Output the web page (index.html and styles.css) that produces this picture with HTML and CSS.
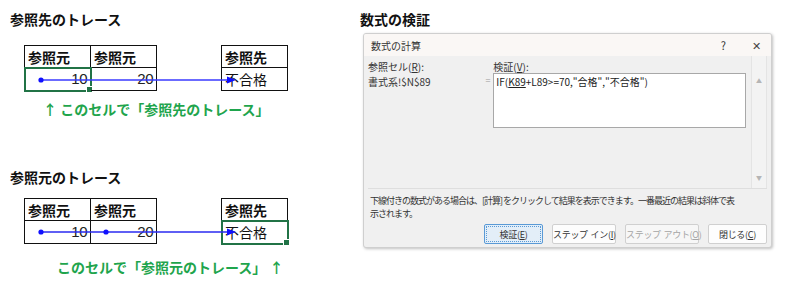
FILE: index.html
```html
<!DOCTYPE html>
<html lang="ja">
<head>
    <meta charset="UTF-8">
    <title>参照先・参照元のトレース</title>
    <link rel="stylesheet" href="styles.css">
</head>
<body>
    <div class="page">
        <div class="left">
            <h2 class="heading">参照先のトレース</h2>
            <div class="trace">
                <div class="sheet">
                    <div class="cell head">参照元</div>
                    <div class="cell head">参照元</div>
                    <div class="cell num selected">10</div>
                    <div class="cell num">20</div>
                </div>
                <div class="sheet single">
                    <div class="cell head">参照先</div>
                    <div class="cell">不合格</div>
                </div>
                <svg class="arrows" width="270" height="50" viewBox="0 0 270 50">
                    <line x1="17" y1="35" x2="206" y2="35" stroke="#3a3aff" stroke-width="1.3"/>
                    <circle cx="17" cy="35" r="2.6" fill="#1010ff"/>
                    <polygon points="212,35 203,31.5 203,38.5" fill="#1010ff"/>
                </svg>
            </div>
            <p class="note first">↑ このセルで「参照先のトレース」</p>

            <h2 class="heading second">参照元のトレース</h2>
            <div class="trace">
                <div class="sheet">
                    <div class="cell head">参照元</div>
                    <div class="cell head">参照元</div>
                    <div class="cell num">10</div>
                    <div class="cell num">20</div>
                </div>
                <div class="sheet single">
                    <div class="cell head">参照先</div>
                    <div class="cell selected">不合格</div>
                </div>
                <svg class="arrows" width="270" height="50" viewBox="0 0 270 50">
                    <line x1="17" y1="34" x2="206" y2="34" stroke="#2a2af0" stroke-width="1.3"/>
                    <circle cx="17" cy="34" r="2.6" fill="#1010ff"/>
                    <circle cx="82" cy="34" r="2.6" fill="#1010ff"/>
                    <polygon points="212,34 203,30.5 203,37.5" fill="#1010ff"/>
                </svg>
            </div>
            <p class="note last">このセルで「参照元のトレース」 ↑</p>
        </div>

        <div class="right">
            <h2 class="heading">数式の検証</h2>
            <div class="dialog">
                <div class="titlebar">
                    <span class="title">数式の計算</span>
                    <span class="help">?</span>
                    <span class="close">✕</span>
                </div>
                <div class="dialog-body">
                    <div class="fields">
                        <div class="ref">
                            <div>参照セル(<u>R</u>):</div>
                            <div>書式系!$N$89</div>
                        </div>
                        <div class="eq">=</div>
                        <div class="eval">
                            <div>検証(<u>V</u>):</div>
                            <div class="formula">IF(<u>K89</u>+L89&gt;=70,"合格","不合格")</div>
                        </div>
                        <div class="scroll">
                            <span>▲</span>
                            <span>▼</span>
                        </div>
                    </div>
                    <div class="hint">下線付きの数式がある場合は、[計算] をクリックして結果を表示できます。一番最近の結果は斜体で表<br>示されます。</div>
                    <div class="buttons">
                        <button class="btn primary">検証(<u>E</u>)</button>
                        <button class="btn">ステップ イン(<u>I</u>)</button>
                        <button class="btn disabled">ステップ アウト(<u>O</u>)</button>
                        <button class="btn">閉じる(<u>C</u>)</button>
                    </div>
                </div>
            </div>
        </div>
    </div>
</body>
</html>
```

FILE: styles.css
```css
* {
    margin: 0;
    padding: 0;
    box-sizing: border-box;
}

body {
    background: #fff;
    color: #111;
    font-family: 'Noto Sans CJK JP', 'Noto Sans', sans-serif;
}

.page {
    display: flex;
}

.left {
    width: 355px;
    padding-left: 10px;
}

.heading {
    font-size: 14px;
    line-height: 20px;
    font-weight: bold;
    margin-top: 9px;
}

.heading.second {
    margin-top: 48px;
}

.trace {
    position: relative;
    display: flex;
    gap: 64px;
    margin: 16px 0 0 14px;
}

.heading.second + .trace {
    margin-top: 11px;
}

.sheet {
    display: grid;
    grid-template-columns: 66px 66px;
    border-left: 1px solid #111;
    border-top: 1px solid #111;
}

.sheet.single {
    grid-template-columns: 66px;
}

.cell {
    position: relative;
    height: 23px;
    border-right: 1px solid #111;
    border-bottom: 1px solid #111;
    font-size: 14px;
    line-height: 22px;
    padding: 0 3px;
}

.cell.head {
    height: 22px;
    font-weight: bold;
}

.cell.num {
    text-align: right;
    font-family: 'Liberation Sans', 'Noto Sans CJK JP', sans-serif;
    font-size: 15px;
    letter-spacing: -0.5px;
    color: #222;
}

.cell.selected {
    outline: 2px solid #217346;
    outline-offset: -1px;
}

.cell.selected::after {
    content: "";
    position: absolute;
    right: -3px;
    bottom: -3px;
    width: 5px;
    height: 5px;
    background: #217346;
    border: 1px solid #fff;
}

.arrows {
    position: absolute;
    left: 0;
    top: 0;
}

.note {
    font-size: 14px;
    line-height: 20px;
    font-weight: bold;
    color: #1fa54d;
}

.note.first {
    margin: 8px 0 0 33px;
}

.note.last {
    margin: 13px 0 0 47px;
}

.right {
    padding-left: 5px;
}

.dialog {
    margin: 4px 0 0 3px;
    width: 409px;
    height: 215px;
    background: #f0f0f0;
    border: 1px solid #cfcfcf;
    border-radius: 3px;
    box-shadow: 1px 1px 3px rgba(0, 0, 0, 0.25);
    font-size: 10px;
    color: #333;
    overflow: hidden;
}

.titlebar {
    display: flex;
    align-items: center;
    height: 22px;
    background: #faf7f5;
    padding: 0 10px 0 7px;
}

.title {
    flex: 1;
    font-size: 10px;
}

.help {
    font-size: 11px;
    margin-right: 26px;
}

.close {
    font-size: 11px;
    color: #444;
}

.dialog-body {
    padding: 0 4px;
}

.fields {
    display: flex;
    height: 133px;
    border-bottom: 1px solid #dedede;
}

.ref {
    width: 118px;
    padding-top: 3px;
    line-height: 15px;
}

.eq {
    width: 8px;
    padding-top: 18px;
    color: #999;
    font-size: 9px;
}

.eval {
    width: 254px;
    padding-top: 3px;
    line-height: 15px;
}

.formula {
    height: 55px;
    background: #fff;
    border: 1px solid #a8a8a8;
    padding: 0 2px;
    margin-top: -1px;
    color: #222;
}

.scroll {
    display: flex;
    flex-direction: column;
    justify-content: space-between;
    align-items: center;
    width: 16px;
    margin-left: 5px;
    border-left: 1px solid #e4e4e4;
    border-right: 1px solid #e4e4e4;
    background: #f3f3f3;
    color: #b5b5b5;
    font-size: 6px;
    padding: 20px 0 6px;
}

.hint {
    height: 35px;
    padding: 5px 0 0 2px;
    font-size: 9px;
    line-height: 13px;
    letter-spacing: -1px;
    white-space: nowrap;
}

.buttons {
    display: flex;
    justify-content: flex-end;
    gap: 9px;
}

.btn {
    height: 20px;
    padding: 0;
    font-family: inherit;
    font-size: 9px;
    letter-spacing: -0.3px;
    word-spacing: 1px;
    white-space: nowrap;
    color: #333;
    background: #fdfdfd;
    border: 1px solid #d0d0d0;
    border-radius: 2px;
}

.btn:nth-child(1) {
    width: 59px;
}

.btn:nth-child(2) {
    width: 64px;
}

.btn:nth-child(3) {
    width: 74px;
}

.btn:nth-child(4) {
    width: 59px;
}

.btn.primary {
    background: #e3eef8;
    border: 1px solid #5a9ad6;
    outline: 1px dotted #5a9ad6;
    outline-offset: -3px;
}

.btn.disabled {
    color: #a5a5a5;
    background: #f7f7f7;
}
```
